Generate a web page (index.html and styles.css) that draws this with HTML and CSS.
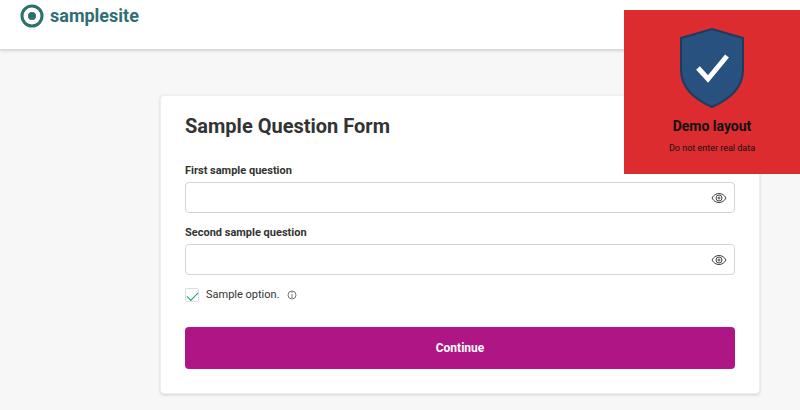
FILE: index.html
```html
<!DOCTYPE html>
<html lang="en">
<head>
    <meta charset="utf-8">
    <title>Sample Form</title>
    <link rel="stylesheet" href="styles.css">
</head>
<body>
    <header class="site-header">
        <div class="logo">
            <svg width="24" height="24" viewBox="0 0 24 24" aria-hidden="true">
                <circle cx="12" cy="12" r="10" fill="none" stroke="#2f6f73" stroke-width="3"/>
                <circle cx="12" cy="12" r="4" fill="#2f6f73"/>
            </svg>
            <span>samplesite</span>
        </div>
    </header>

    <!-- Demo notice in the top right corner -->
    <aside class="notice">
        <svg width="68" height="84" viewBox="0 0 68 84" aria-hidden="true">
            <path d="M34 3 L65 12 V44 C65 62 50 74 34 81 C18 74 3 62 3 44 V12 Z" fill="#29517f" stroke="#1d3b5e" stroke-width="2"/>
            <path d="M20 42 L30 53 L49 30" fill="none" stroke="#ffffff" stroke-width="5"/>
        </svg>
        <strong>Demo layout</strong>
        <small>Do not enter real data</small>
    </aside>

    <main class="card">
        <h1>Sample Question Form</h1>
        <form onsubmit="return false">
            <label for="first">First sample question</label>
            <div class="field">
                <input type="text" id="first" autocomplete="off">
                <button type="button" class="eye" aria-label="Show answer">
                    <svg width="16" height="12" viewBox="0 0 16 12"><path d="M1 6 C4 0 12 0 15 6 C12 12 4 12 1 6 Z"/><circle cx="8" cy="6" r="3"/><circle cx="8" cy="6" r="1"/></svg>
                </button>
            </div>
            <label for="second">Second sample question</label>
            <div class="field">
                <input type="text" id="second" autocomplete="off">
                <button type="button" class="eye" aria-label="Show answer">
                    <svg width="16" height="12" viewBox="0 0 16 12"><path d="M1 6 C4 0 12 0 15 6 C12 12 4 12 1 6 Z"/><circle cx="8" cy="6" r="3"/><circle cx="8" cy="6" r="1"/></svg>
                </button>
            </div>
            <div class="remember">
                <input type="checkbox" id="option" checked>
                <label for="option">Sample option.</label>
                <svg width="10" height="10" viewBox="0 0 10 10" aria-hidden="true"><circle cx="5" cy="5" r="4" fill="none" stroke="#777777"/><path d="M5 4 V8 M5 2 V3" stroke="#777777"/></svg>
            </div>
            <button type="submit" class="continue">Continue</button>
        </form>
    </main>
</body>
</html>
```

FILE: styles.css
```css
* {
    box-sizing: border-box;
}

body {
    margin: 0;
    background: #f7f7f7;
    font-family: Roboto, sans-serif;
    font-size: 11px;
    line-height: 14px;
    color: #333333;
}

.site-header {
    height: 50px;
    padding: 4px 20px;
    background: #ffffff;
    border-bottom: 1px solid #d8d8d8;
    box-shadow: 0 1px 3px rgba(0, 0, 0, 0.15);
}

.logo {
    display: flex;
    align-items: center;
    gap: 6px;
    font-size: 18px;
    line-height: 24px;
    font-weight: bold;
    color: #2f6f73;
}

.notice {
    position: absolute;
    top: 10px;
    right: 0;
    width: 22%;
    height: 164px;
    padding-top: 16px;
    display: flex;
    flex-direction: column;
    align-items: center;
    gap: 8px;
    background: #dc2c2f;
    color: #111111;
}

.notice strong {
    font-size: 14px;
    line-height: 16px;
}

.notice small {
    font-size: 9px;
    line-height: 12px;
}

.card {
    width: 75%;
    max-width: 720px;
    margin: 45px auto 16px;
    padding: 18px 24px 24px;
    background: #ffffff;
    border: 1px solid #eeeeee;
    border-radius: 4px;
    box-shadow: 0 1px 3px rgba(0, 0, 0, 0.15);
}

@media (min-width: 700px) {
    .card {
        margin-right: 5%;
    }
}

h1 {
    margin: 0 0 26px;
    font-size: 20px;
    line-height: 24px;
}

label {
    display: block;
    margin-bottom: 4px;
    font-weight: bold;
}

.field {
    display: flex;
    align-items: center;
    height: 31px;
    margin-bottom: 13px;
    border: 1px solid #d5d5d5;
    border-radius: 4px;
}

.field input {
    flex: 1;
    min-width: 0;
    height: 100%;
    padding: 0 8px;
    border: none;
    background: none;
    font: inherit;
}

.eye {
    display: flex;
    padding: 0 7px;
    border: none;
    background: none;
    cursor: pointer;
}

.eye svg {
    fill: none;
    stroke: #444444;
}

.remember {
    display: flex;
    align-items: center;
    gap: 7px;
    margin-bottom: 25px;
}

.remember input {
    appearance: none;
    width: 14px;
    height: 14px;
    margin: 0;
    display: grid;
    place-items: center;
    border: 1px solid #dddddd;
    border-radius: 2px;
}

.remember input:checked::before {
    content: "";
    width: 10px;
    height: 5px;
    border-left: 1px solid #1d9a7c;
    border-bottom: 1px solid #1d9a7c;
    transform: rotate(-45deg);
}

.remember label {
    margin: 0;
    font-weight: normal;
}

.continue {
    display: block;
    width: 100%;
    height: 42px;
    border: none;
    border-radius: 4px;
    background: #af1685;
    color: #ffffff;
    font-family: inherit;
    font-size: 12px;
    font-weight: bold;
    cursor: pointer;
}
```
